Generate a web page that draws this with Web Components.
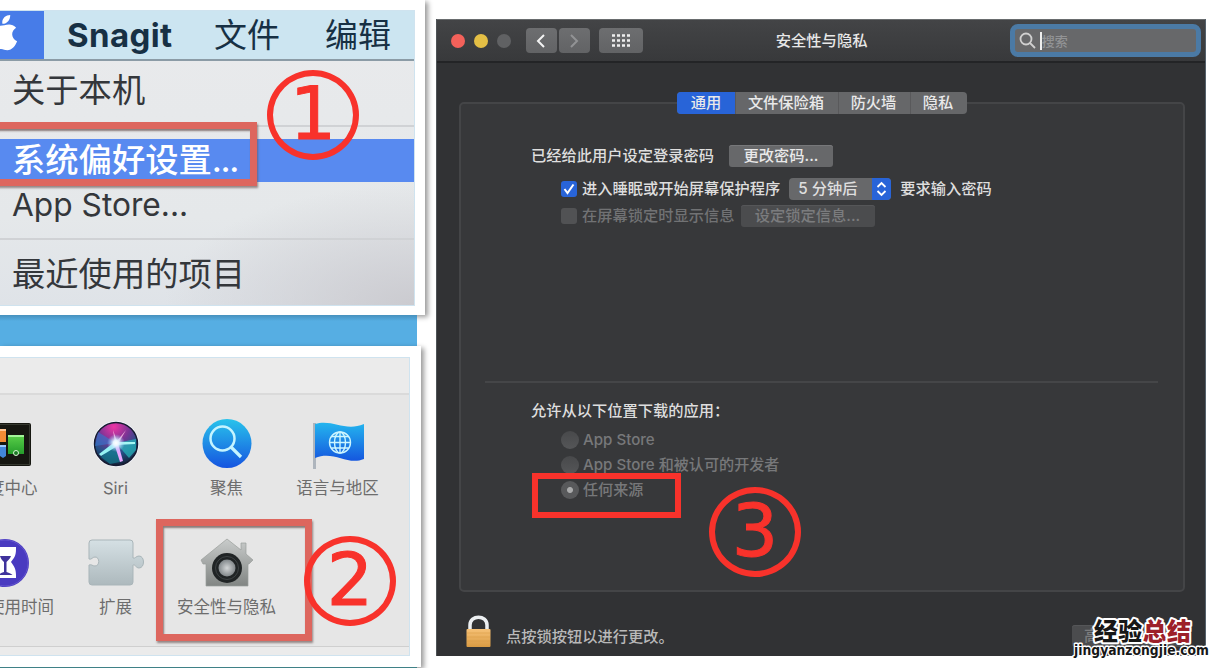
<!DOCTYPE html>
<html lang="zh-CN">
<head>
<meta charset="utf-8">
<title>安全性与隐私</title>
<style>
  body {
    margin: 0;
    width: 1224px;
    height: 668px;
    overflow: hidden;
    background: #fff;
    font-family: Inter, "Noto Sans CJK SC", sans-serif;
  }
</style>
</head>
<body>
<guide-page></guide-page>
<script>
const define = (name, html) => {
  const template = document.createElement("template");
  template.innerHTML = html;
  customElements.define(name, class extends HTMLElement {
    constructor() {
      super();
      this.attachShadow({ mode: "open" });
      this.shadowRoot.appendChild(template.content.cloneNode(true));
    }
  });
};

// numbered ring and highlight box, laid over the screens
define("step-mark", `
  <style>
    :host {
      position: absolute;
      box-sizing: border-box;
      width: 92px;
      height: 90px;
      border: 6px solid #f8322b;
      border-radius: 50%;
      color: #f8322b;
      font: 73px/76px "DejaVu Sans", sans-serif;
      -webkit-text-stroke: 1px #f8322b;
      text-align: center;
    }
  </style>
  <slot></slot>
`);

define("mark-box", `
  <style>
    :host {
      position: absolute;
      box-sizing: border-box;
      border: 7px solid #dd665e;
      box-shadow: 1px 2px 2px #6b5452aa, inset 1px 2px 2px #5b4542aa;
    }
    :host([flat]) { border: 6px solid #f8322b; box-shadow: none; }
  </style>
`);

define("photo-frame", `
  <style>
    :host {
      display: block;
      box-sizing: border-box;
      position: relative;
      background: #fff;
      box-shadow: 3px 2px 5px #0006;
    }
    div {
      box-sizing: border-box;
      height: 100%;
      overflow: hidden;
      border: 1px solid #cfe3ef;
      border-left: 0;
    }
  </style>
  <div><slot></slot></div>
`);

define("menu-item", `
  <style>
    :host {
      display: block;
      padding-left: 12px;
      font-size: 33.3px;
      height: var(--h, 60px);
      line-height: var(--h, 60px);
      color: #34373b;
      white-space: nowrap;
    }
    :host([selected]) { background: #588af0; color: #fff; font-weight: 500; }
  </style>
  <slot></slot>
`);

define("apple-menu", `
  <style>
    :host {
      display: block;
      height: 100%;
      background: radial-gradient(ellipse 250px 120px at 100% 100%, #cbcbd0, #cbcbd000),
        linear-gradient(#e9eaec, #e5e8ea 70%, #dfe3e8);
    }
    nav {
      display: flex;
      align-items: center;
      height: 48px;
      border-bottom: 2px solid #8b9ba6;
      background: #cce5f1;
      color: #173044;
      font-size: 33px;
      line-height: 49px;
      white-space: nowrap;
    }
    nav * { flex: none; }
    .logo { width: 44px; height: 48px; background: #477ce8; margin-right: 23px; }
    b { width: 147px; font-size: 33px; letter-spacing: .4px; }
    span { width: 111px; }
    span:last-child { width: 70px; }
    hr { margin: 0; border: 0; border-top: 2px solid #d0d2d5; }
    .first { margin: 5px 0 12px; }
    .second { margin: 11px 0 9px; }
  </style>
  <nav>
    <svg class="logo" viewBox="0 0 44 49">
      <path fill="#fff" d="M2 13C1 8 5 4 10 4C10 9 7 13 2 13ZM-12 16C-6 12 -3 15 0 15C4 15 11 11 16 17C10 21 11 28 17 31C15 36 12 40 7 40C4 40 2 38 -1 39C-5 40 -8 41 -12 37Z"/>
    </svg>
    <b>Snagit</b><span>文件</span><span>编辑</span>
  </nav>
  <menu-item style="--h:59px">关于本机</menu-item>
  <hr class="first">
  <menu-item selected style="--h:43px">系统偏好设置<span style="letter-spacing:-1.3px">...</span></menu-item>
  <menu-item style="--h:45px;font-size:31.7px">App Store...</menu-item>
  <hr class="second">
  <menu-item style="--h:50px">最近使用的项目</menu-item>
`);

define("pref-item", `
  <style>
    :host {
      display: flex;
      flex-direction: column;
      align-items: center;
      height: 119px;
      color: #6d6d6d;
      font-size: 16.5px;
      white-space: nowrap;
    }
    .icon { height: 56px; margin-bottom: 4px; }
    .label { line-height: 24px; padding-left: var(--shift, 0); }
  </style>
  <div class="icon"><slot name="icon"></slot></div>
  <div class="label"><slot></slot></div>
`);

define("pref-grid", `
  <style>
    :host { display: block; height: 100%; background: #ebebeb; }
    header { height: 35px; border-bottom: 2px solid #dadada; }
    main {
      display: grid;
      grid-template-columns: repeat(4, 111px);
      height: 230px;
      margin-left: -51px;
      padding-top: 21px;
    }
    .body { background: #e6e6e6; border-bottom: 1px solid #cfcfcf; width: 100%; overflow: hidden; }
    svg { display: block; overflow: visible; }
  </style>
  <header></header>
  <div class="body"><main>
    <pref-item style="--shift:16.5px">
      <svg slot="icon" width="56" height="56">
        <defs><linearGradient id="g" x2="0" y2="1"><stop stop-color="#5bd04a"/><stop offset="1" stop-color="#259d2b"/></linearGradient></defs>
        <rect x="2" y="7" width="52" height="43" rx="2" fill="#161711"/>
        <rect x="3.500" y="8.500" width="49" height="40" fill="none" stroke="#35382f"/>
        <path fill="#f28b35" d="M10 13h19v13H10z"/><path fill="#ffc594" d="M10 13h19v2H10z"/>
        <path fill="#4287da" d="M10 29h19v11l-3 2-3-2H10z"/><path fill="#9bc9ff" d="M10 29h19v2H10z"/>
        <path fill="url(#g)" d="M31 19h16v19H31z"/><path fill="#a4f59a" d="M31 19h16v2H31z"/>
        <circle cx="39" cy="37" r="2.500" fill="#1b7925" stroke="#d8f5d5"/>
      </svg>
      度中心
    </pref-item>
    <pref-item>
      <svg slot="icon" width="56" height="56" viewBox="0 0 56 56">
        <defs>
          <radialGradient id="s" cx=".45" cy=".1" r=".95"><stop stop-color="#ee35a5"/><stop offset=".38" stop-color="#783494"/><stop offset=".65" stop-color="#24528a"/><stop offset="1" stop-color="#101829"/></radialGradient>
          <radialGradient id="w"><stop stop-color="#fff"/><stop offset=".3" stop-color="#e8f5ff"/><stop offset="1" stop-color="#9cf" stop-opacity="0"/></radialGradient>
        </defs>
        <circle cx="28" cy="28" r="23" fill="#f4f7ff"/>
        <circle cx="28" cy="28" r="21.500" fill="url(#s)" stroke="#171b30" stroke-width="1.500"/>
        <path fill="#28b9be" opacity=".7" d="M28 27 48 23 48 34 41 42Z"/>
        <path fill="#347ad0" opacity=".6" d="M28 27 10 16 7 30Z"/>
        <path fill="#167d91" opacity=".7" d="M27 28 13 41 22 48 32 46Z"/>
        <path fill="#96f3f3" d="M28 25 11 38 13 40 31 29Z"/>
        <path fill="#e7a7ff" d="M26 27 32 46 35 45 30 27Z"/>
        <path fill="#ffc5e8" opacity=".8" d="M27 28 25 14 29 25 38 14 30 28Z"/>
        <path fill="#a6f7f3" d="M28 26 47 26 47 28 28 29Z"/>
        <circle cx="28" cy="27" r="9" fill="url(#w)"/>
      </svg>
      Siri
    </pref-item>
    <pref-item>
      <svg slot="icon" width="56" height="56">
        <defs><linearGradient id="b" x2="0" y2="1"><stop stop-color="#29c3eb"/><stop offset="1" stop-color="#1554e0"/></linearGradient></defs>
        <circle cx="28" cy="27.500" r="24.500" fill="url(#b)"/>
        <circle cx="23.500" cy="22.500" r="12" fill="none" stroke="#c5f4ff" stroke-width="2.500"/>
        <path d="m32 31 10 10" stroke="#c5f4ff" stroke-width="3.200"/>
      </svg>
      聚焦
    </pref-item>
    <pref-item>
      <svg slot="icon" width="56" height="56">
        <defs><linearGradient id="f" x2="0" y2="1"><stop stop-color="#24b5ee"/><stop offset="1" stop-color="#1557df"/></linearGradient></defs>
        <path fill="#aeb5bd" d="M3 7h3v46H3z"/>
        <path fill="url(#f)" d="M5 8C23 3 35 16 54 8V43C37 50 24 34 5 42Z"/>
        <g fill="none" stroke="#cdf6ff" stroke-width="1.400"><circle cx="30" cy="26.500" r="10.500"/><ellipse cx="30" cy="26.500" rx="5.500" ry="10.500"/><path d="M30 16v21M20 26.500h21M22 20.500h16M22 32h16"/></g>
      </svg>
      语言与地区
    </pref-item>
    <pref-item style="--shift:33px">
      <svg slot="icon" width="56" height="56">
        <circle cx="28" cy="28" r="24" fill="#493ac0"/>
        <circle cx="28" cy="28" r="23" fill="none" stroke="#6253ce"/>
        <path fill="#fff" d="M18 12h21v2c0 7-2 9-5 13 3 4 5 7 5 13v3H18v-3c0-6 2-9 5-13-3-4-5-6-5-13Z"/>
        <path fill="#3f329c" d="M23 21h11c-1 3-3 4-4.500 6v10c3 1 5 2 6 3H21c1-1 3-2 6-3V27c-2-2-3-3-4-6Z"/>
      </svg>
      使用时间
    </pref-item>
    <pref-item>
      <svg slot="icon" width="56" height="56">
        <defs><linearGradient id="p" x2="0" y2="1"><stop stop-color="#d5e0e4"/><stop offset="1" stop-color="#adb9bd"/></linearGradient></defs>
        <path fill="url(#p)" stroke="#a9b5b9" d="M4 5H42Q45 5 45 8V23C47 24 48 21 51 21C57 21 57 33 51 33C48 33 47 29 45 30V47Q45 50 42 50H4Q1 50 1 47V30C4 29 4 31 7 31C12 31 12 22 7 22C4 22 4 25 1 24V8Q1 5 4 5Z"/>
      </svg>
      扩展
    </pref-item>
    <pref-item>
      <svg slot="icon" width="56" height="56">
        <defs>
          <linearGradient id="h" x2="0" y2="1"><stop stop-color="#c9cccb"/><stop offset="1" stop-color="#818583"/></linearGradient>
          <radialGradient id="k"><stop stop-color="#d3d6d7"/><stop offset="1" stop-color="#81878a"/></radialGradient>
        </defs>
        <path fill="url(#h)" stroke="#999e9b" stroke-width=".7" d="M28 4 42 15V8H47V19L54 25 50 29H49V51H7V29H4L2 25Z"/>
        <circle cx="28" cy="33" r="15" fill="#202425"/>
        <circle cx="28" cy="33" r="11.500" fill="none" stroke="#4b5051" stroke-width=".7"/>
        <circle cx="28" cy="33" r="8.500" fill="url(#k)"/>
      </svg>
      安全性与隐私
    </pref-item>
  </main></div>
`);

define("mac-button", `
  <style>
    :host {
      display: block;
      box-sizing: border-box;
      height: 22px;
      border-radius: 3px;
      background: #67686a;
      box-shadow: inset 0 1px #77787a;
      color: #e9e9e9;
      line-height: 22px;
      text-align: center;
      white-space: nowrap;
    }
    :host([disabled]) { background: #4b4c4e; box-shadow: inset 0 1px #555658; color: #7b7c7e; }
  </style>
  <slot></slot>
`);

define("title-bar", `
  <style>
    :host {
      display: flex;
      align-items: center;
      box-sizing: border-box;
      height: 44px;
      padding: 0 4px 0 14px;
      border-top: 1px solid #696c6e;
      border-bottom: 2px solid #232426;
      background: linear-gradient(#434446, #38393b);
    }
    i { width: 14px; height: 14px; border-radius: 50%; margin-right: 9px; }
    .tool {
      display: grid;
      place-items: center;
      height: 25px;
      width: 31px;
      border-radius: 4px;
      background: linear-gradient(#6d6e70, #626365);
      margin-right: 2px;
    }
    .grid { width: 44px; margin-left: 7px; }
    .title { margin-left: 131px; width: 235px; font-size: 15.3px; font-weight: 500; color: #e8e8e8; }
    .search {
      display: flex;
      align-items: center;
      box-sizing: border-box;
      width: 191px;
      height: 33px;
      border: 5px solid #4b7aa5;
      border-radius: 8px;
      background: #67686a;
      padding-left: 4px;
      font-size: 13px;
      color: #929395;
    }
    .caret { width: 1.5px; height: 18px; background: #eee; margin-left: 4px; }
  </style>
  <i style="background:#f3615a"></i><i style="background:#e4bf45"></i><i style="background:#606163;margin-right:15px"></i>
  <div class="tool"><svg width="14" height="16"><path d="M10 2 4 8l6 6" fill="none" stroke="#f3f3f3" stroke-width="2"/></svg></div>
  <div class="tool"><svg width="14" height="16"><path d="m4 2 6 6-6 6" fill="none" stroke="#929395" stroke-width="2"/></svg></div>
  <div class="tool grid"><svg width="18" height="13"><path d="M0 1.500h18M0 6.500h18M0 11.500h18" fill="none" stroke="#eee" stroke-width="2.500" stroke-dasharray="3 2"/></svg></div>
  <div class="title">安全性与隐私</div>
  <div class="search">
    <svg width="17" height="17"><g fill="none" stroke="#d0d0d0" stroke-width="1.800"><circle cx="7" cy="7" r="5.500"/><path d="m11 11 5 5"/></g></svg>
    <div class="caret"></div>搜索
  </div>
`);

define("tab-strip", `
  <style>
    :host {
      position: absolute;
      left: 216px;
      top: -12px;
      display: grid;
      grid-template-columns: 58px 103px 72px 57px;
      height: 22px;
      border-radius: 4px;
      overflow: hidden;
      background: #666769;
      color: #e9e9e9;
      line-height: 22px;
      text-align: center;
      font-weight: 500;
    }
    span { padding-right: 2px; }
    span + span { border-left: 1px solid #59595b; }
    .on { background: #2864d8; padding: 0; }
  </style>
  <span class="on">通用</span><span>文件保险箱</span><span>防火墙</span><span>隐私</span>
`);

define("radio-row", `
  <style>
    :host { display: flex; align-items: center; height: 25px; margin-left: 100px; color: #77787a; font-size: 15.1px; }
    i { width: 18px; height: 18px; margin-right: 4px; border-radius: 50%; background: linear-gradient(#48494b, #555658); }
    :host([checked]) i { background: radial-gradient(circle, #aaabac 2.5px, #58595b 3.5px); }
  </style>
  <i></i><slot></slot>
`);

define("security-window", `
  <style>
    :host {
      display: block;
      box-sizing: border-box;
      position: relative;
      width: 770px;
      height: 637px;
      border-left: 1px solid #4e5356;
      border-right: 1px solid #55616b;
      background: #313234;
      color: #dedede;
      font-size: 15.25px;
      font-weight: 500;
      line-height: 22px;
      white-space: nowrap;
    }
    section {
      position: relative;
      box-sizing: border-box;
      width: 726px;
      height: 490px;
      margin: 39px 0 0 22px;
      padding-top: 41px;
      border: 2px solid #444547;
      border-radius: 5px;
      background: #37383a;
    }
    .row { display: flex; align-items: center; height: 22px; }
    .check { display: grid; place-items: center; width: 16px; height: 16px; border-radius: 3px; background: #2864d8; margin: 0 5px 0 100px; }
    .off { color: #717274; }
    .off .check { background: #515254; }
    .popup { display: flex; justify-content: space-between; width: 102px; border-radius: 4px; background: #67686a; margin: 0 9px; padding-left: 9px; box-sizing: border-box; overflow: hidden; }
    .arrows { display: grid; place-items: center; width: 19px; background: #2864d8; }
    hr { margin: 154px 25px 17px 24px; border: 0; border-top: 2px solid #454648; }
    footer { display: flex; align-items: center; margin: 22px 0 0 29px; height: 36px; color: #b9b9b9; }
    footer span { margin: 10px auto 0 15px; }
    footer mac-button { width: 113px; margin: 7px 20px 0 0; text-align: left; padding-left: 12px; }
  </style>
  <title-bar></title-bar>
  <section>
    <tab-strip></tab-strip>
    <div class="row" style="margin-left:70px">已经给此用户设定登录密码<mac-button style="width:104px;margin-left:15px">更改密码...</mac-button></div>
    <div class="row" style="margin-top:11px">
      <div class="check"><svg width="12" height="12"><path d="m1.500 6 3 4L10.500 1.500" fill="none" stroke="#fff" stroke-width="2"/></svg></div>
      进入睡眠或开始屏幕保护程序
      <div class="popup">5 分钟后<div class="arrows"><svg width="11" height="16"><path d="m1.500 6 4-4 4 4m-8 4 4 4 4-4" fill="none" stroke="#fff" stroke-width="1.800"/></svg></div></div>
      要求输入密码
    </div>
    <div class="row off" style="margin-top:5px"><div class="check"></div>在屏幕锁定时显示信息<mac-button disabled style="width:134px;margin-left:6px">设定锁定信息...</mac-button></div>
    <hr>
    <div class="row" style="margin:0 0 5px 70px">允许从以下位置下载的应用：</div>
    <radio-row>App Store</radio-row>
    <radio-row>App Store 和被认可的开发者</radio-row>
    <radio-row checked>任何来源</radio-row>
  </section>
  <footer>
    <svg width="25" height="34">
      <defs><linearGradient id="l" x2="0" y2="1"><stop stop-color="#f6c176"/><stop offset="1" stop-color="#d99b43"/></linearGradient></defs>
      <path d="M4 16V10C4-.5 21-.5 21 10V16" fill="none" stroke="#eceff1" stroke-width="3.500"/>
      <rect x=".5" y="14" width="24" height="18" rx="1" fill="url(#l)"/>
      <path d="M1 18h23M1 22h23M1 26h23" stroke="#d99a43" opacity=".5"/>
    </svg>
    <span>点按锁按钮以进行更改。</span>
    <mac-button disabled>高</mac-button>
  </footer>
`);

define("site-mark", `
  <style>
    :host { position: absolute; left: 1068px; top: 614px; }
    svg { display: block; }
    text { paint-order: stroke; stroke: #fff; stroke-width: 4px; stroke-linejoin: round; }
  </style>
  <svg width="150" height="50">
    <text x="26" y="26" font-family="Noto Sans CJK SC" font-size="24" font-weight="900" textLength="97" fill="#171717">经验<tspan fill="#9d2029">总结</tspan></text>
    <text x="6" y="41" font-family="DejaVu Sans" font-size="14.500" font-weight="700" textLength="135" lengthAdjust="spacingAndGlyphs" fill="#171717" style="stroke-width:3px">jingyanzongjie.com</text>
  </svg>
`);

define("guide-page", `
  <style>
    :host { display: flex; position: relative; width: 1224px; height: 668px; overflow: hidden; }
    aside { width: 436px; flex: none; }
    .menu { width: 425px; height: 315px; padding: 10px 10px 9px 0; }
    .strip { width: 417px; height: 31px; background: linear-gradient(#4690bd, #56aee3 6px); position: relative; }
    .prefs { width: 421px; height: 321px; padding: 11px 11px 11px 0; }
    .edge { width: 417px; height: 1px; background: #3f8187; position: relative; }
    security-window { margin-top: 19px; }
  </style>
  <aside>
    <photo-frame class="menu"><apple-menu></apple-menu></photo-frame>
    <div class="strip"></div>
    <photo-frame class="prefs"><pref-grid></pref-grid></photo-frame>
    <div class="edge"></div>
  </aside>
  <security-window></security-window>
  <mark-box style="left:-10px;top:122px;width:267px;height:64px"></mark-box>
  <mark-box style="left:156px;top:519px;width:156px;height:122px"></mark-box>
  <mark-box flat style="left:532px;top:473px;width:149px;height:45px"></mark-box>
  <step-mark style="left:267px;top:70px">1</step-mark>
  <step-mark style="left:304px;top:536px">2</step-mark>
  <step-mark style="left:709px;top:487px">3</step-mark>
  <site-mark></site-mark>
`);
</script>
</body>
</html>
